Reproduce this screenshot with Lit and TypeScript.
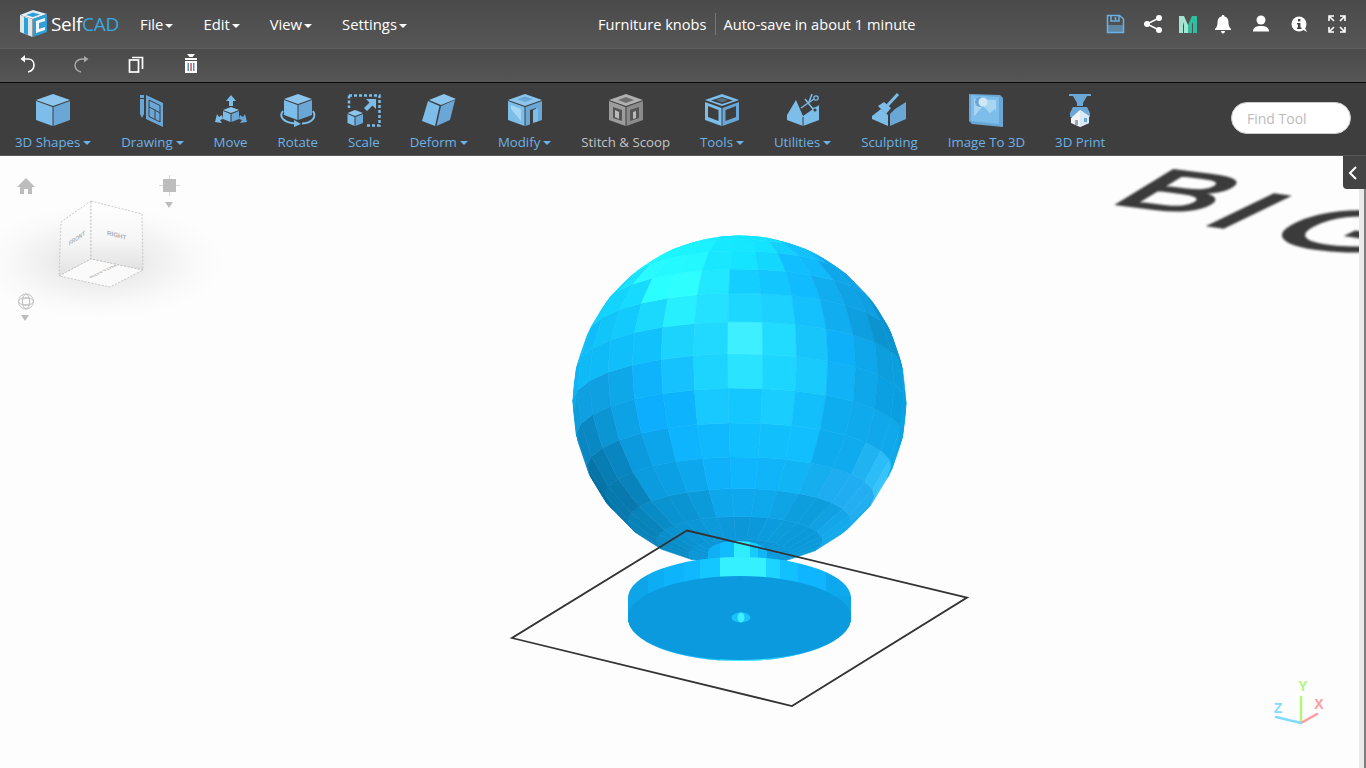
import { LitElement, html, css, svg } from "lit";
import { customElement } from "lit/decorators.js";

const RAD = Math.PI / 180;

// colour samples read off the reference, blended per facet
const SPHERE_COLOURS: [number, number, string][] = [
  [740, 250, "#14e8ff"], [680, 250, "#18f4ff"], [660, 285, "#2cffff"], [690, 280, "#30ffff"],
  [625, 295, "#12d4ff"], [590, 360, "#0fbcf8"], [740, 285, "#12ccff"], [800, 285, "#10bcff"],
  [850, 285, "#0fa2e6"], [885, 330, "#0b93cf"], [900, 400, "#0a9fe0"], [745, 340, "#40f2ff"],
  [712, 340, "#20d8ff"], [780, 340, "#22dcff"], [745, 375, "#2ae4ff"], [712, 375, "#1cd4ff"],
  [780, 375, "#1cd6ff"], [640, 340, "#10c0fb"], [660, 400, "#0caeff"], [600, 400, "#0e9fe0"],
  [590, 450, "#0a86c2"], [600, 490, "#056f9f"], [625, 510, "#0779ae"], [660, 470, "#0b9fe6"],
  [740, 420, "#10c4ff"], [740, 470, "#0fb6ff"], [840, 440, "#0ca8ec"], [885, 450, "#10a8ea"],
  [874, 486, "#3cc8ff"], [850, 505, "#1ea9ef"], [740, 505, "#0ea8ee"], [680, 510, "#0a94d2"],
  [640, 535, "#0883ba"], [740, 540, "#0b93d4"], [810, 530, "#0a99d8"], [850, 535, "#12adf0"],
  [840, 350, "#0fb0fa"], [690, 445, "#0fb4ff"], [800, 440, "#11c0ff"],
];

function hex(c: string) {
  return [1, 3, 5].map((i) => parseInt(c.slice(i, i + 2), 16));
}

function sampleColour(x: number, y: number) {
  let sum = 0;
  const rgb = [0, 0, 0];
  for (const [px, py, c] of SPHERE_COLOURS) {
    const d = (px - x) ** 2 + (py - y) ** 2 + 200;
    const w = 1 / (d * d);
    const v = hex(c);
    sum += w;
    rgb[0] += v[0] * w;
    rgb[1] += v[1] * w;
    rgb[2] += v[2] * w;
  }
  return `rgb(${rgb.map((v) => Math.round(v / sum)).join(",")})`;
}

function sphereFacets() {
  const R = 167, cx = 739.5, cy = 402, tilt = 16.8 * RAD;
  const project = (lat: number, lon: number) => {
    const p = lat * RAD, l = lon * RAD;
    return {
      x: cx + R * Math.cos(p) * Math.sin(l),
      y: cy - R * (Math.sin(p) * Math.cos(tilt) + Math.cos(p) * Math.cos(l) * Math.sin(tilt)),
      z: Math.cos(p) * Math.cos(l) * Math.cos(tilt) - Math.sin(p) * Math.sin(tilt),
    };
  };
  const facets = [];
  for (let lat = -84; lat < 84; lat += 12) {
    for (let lon = -112; lon < 112; lon += 12) {
      const c = [project(lat, lon), project(lat, lon + 12), project(lat + 12, lon + 12), project(lat + 12, lon)];
      if (c.every((q) => q.z < 0)) continue;
      const mx = c.reduce((a, q) => a + q.x, 0) / 4;
      const my = c.reduce((a, q) => a + q.y, 0) / 4;
      const fill = sampleColour(mx, my);
      const pts = c.map((q) => `${q.x.toFixed(1)},${q.y.toFixed(1)}`).join(" ");
      facets.push(svg`<polygon points=${pts} fill=${fill} stroke=${fill} stroke-width="0.6"></polygon>`);
    }
  }
  return facets;
}

const WALL: [number, number, string][] = [
  [628, 20, "#0ea5e8"], [648, 16, "#0cadf2"], [664, 20, "#0db4fb"], [684, 16, "#0fb8ff"],
  [700, 20, "#14c8ff"], [720, 46, "#35f0ff"], [766, 14, "#1cd4ff"], [780, 18, "#12c0ff"],
  [798, 28, "#0fb6ff"], [826, 25, "#0da8ee"],
];

const STEM: [number, number, string][] = [
  [708, 12, "#0fb0f4"], [720, 14, "#10bcff"], [734, 16, "#30ecff"], [750, 8, "#16ccff"], [758, 9, "#10b6f8"],
];

const scene = svg`
  <defs>
    <clipPath id="sphereClip"><circle cx="739.5" cy="402.5" r="167"></circle></clipPath>
    <clipPath id="diskClip"><path d="M628 598A111.500 41 0 0 1 851 598V618A111.500 43 0 0 1 628 618Z"></path></clipPath>
    <clipPath id="stemClip"><path d="M708 552A29.500 11 0 0 1 767 552V570H708Z"></path></clipPath>
    <clipPath id="textClip"><rect x="1100" y="156" width="259" height="120"></rect></clipPath>
    <radialGradient id="cubeShadow">
      <stop offset="0" stop-color="#000" stop-opacity="0.16"></stop>
      <stop offset="0.4" stop-color="#000" stop-opacity="0.06"></stop>
      <stop offset="0.75" stop-color="#000" stop-opacity="0.015"></stop>
      <stop offset="1" stop-color="#000" stop-opacity="0"></stop>
    </radialGradient>
    <linearGradient id="faceFill" x1="0" y1="0" x2="0" y2="1">
      <stop offset="0" stop-color="#fff"></stop>
      <stop offset="0.55" stop-color="#f6f6f6"></stop>
      <stop offset="1" stop-color="#e2e2e2"></stop>
    </linearGradient>
    <filter id="soft"><feGaussianBlur stdDeviation="0.8"></feGaussianBlur></filter>
  </defs>

  <g clip-path="url(#textClip)" filter="url(#soft)" fill="#3a3a3a" stroke="#3a3a3a" stroke-width="3" font-family="'Liberation Sans', sans-serif" font-size="100">
    <text transform="matrix(1.42 0.18 -0.82 0.5 1106 203)">B</text>
    <text transform="matrix(1.45 0.2 -0.95 0.46 1196 224)">I</text>
    <text transform="matrix(1.6 0.24 -1.05 0.5 1254 239)">G</text>
  </g>

  <g clip-path="url(#sphereClip)">${sphereFacets()}</g>

  <g clip-path="url(#stemClip)">
    ${STEM.map(([x, w, c]) => svg`<rect x=${x} y="535" width=${w} height="40" fill=${c}></rect>`)}
  </g>

  <g clip-path="url(#diskClip)">
    ${WALL.map(([x, w, c]) => svg`<rect x=${x} y="550" width=${w} height="120" fill=${c}></rect>`)}
    <rect x="620" y="596" width="240" height="30" fill="#0ea4e8"></rect>
    <ellipse cx="739.500" cy="618" rx="112" ry="42" fill="#0b9ade"></ellipse>
    <path d="M628 618A111.500 43 0 0 0 851 618V622A111.500 40 0 0 1 628 622Z" fill="#12a8ee"></path>
  </g>
  <ellipse cx="741" cy="617.500" rx="9.500" ry="5" fill="#1cc0fa"></ellipse>
  <ellipse cx="741" cy="617.500" rx="3.500" ry="5" fill="#3cf0ff"></ellipse>

  <polygon points="687,530.500 967,597.500 792,706 512,638" fill="none" stroke="#333" stroke-width="1.800"></polygon>

  <ellipse cx="100" cy="262" rx="125" ry="58" fill="url(#cubeShadow)"></ellipse>
  <g stroke="#bdbdbd" stroke-width="0.8" stroke-dasharray="2 1.500">
    <polygon points="91,201 61,222 59,276 91,259" fill="url(#faceFill)"></polygon>
    <polygon points="91,201 142,214 143,270 91,259" fill="url(#faceFill)"></polygon>
    <polygon points="59,276 91,259 143,270 110,287" fill="#fafafa"></polygon>
  </g>
  <g fill="#b0b0b0" font-family="'Liberation Sans', sans-serif" font-size="6.500" font-weight="700">
    <text transform="matrix(0.72 -0.5 0 1 69 246)">FRONT</text>
    <text transform="matrix(0.95 0.24 0 1 107 235)">RIGHT</text>
    <text transform="matrix(0.95 -0.45 0.5 0.2 91 278)">BOTTOM</text>
  </g>

  <path d="M26 178L35 187H32V194H28V189H24V194H20V187H17Z" fill="#bdbdbd"></path>
  <g fill="#bdbdbd">
    <rect x="163" y="179" width="13" height="13"></rect>
    <rect x="169" y="175" width="1" height="21" opacity="0.6"></rect>
    <rect x="159" y="185" width="21" height="1" opacity="0.6"></rect>
    <path d="M165 202H173L169 208Z"></path>
    <path d="M21 315H29L25 321Z"></path>
  </g>
  <g fill="none" stroke="#c2c2c2" stroke-width="1">
    <circle cx="26" cy="301.500" r="7.500"></circle>
    <ellipse cx="26" cy="301.500" rx="3.500" ry="7.500"></ellipse>
    <ellipse cx="26" cy="301.500" rx="7.500" ry="3.500"></ellipse>
    <rect x="22.500" y="298" width="7" height="7"></rect>
  </g>

  <g stroke-width="2.500" stroke-linecap="round">
    <line x1="1301" y1="723" x2="1301" y2="697" stroke="#b5f57c"></line>
    <line x1="1301" y1="723" x2="1317" y2="714" stroke="#ff9c9c"></line>
    <line x1="1301" y1="723" x2="1276" y2="717" stroke="#80dcff"></line>
  </g>
  <g font-family="'Liberation Sans', sans-serif" font-size="14" font-weight="700" text-anchor="middle">
    <text x="1303" y="691" fill="#b5f57c">Y</text>
    <text x="1319" y="709" fill="#ff9c9c">X</text>
    <text x="1278" y="713" fill="#80dcff">Z</text>
  </g>
`;

const L = "#7cbde9"; // light face
const M = "#6aa7d6"; // darker face
const D = "#3e3e3e"; // toolbar colour, used for cut lines

const toolIcons: Record<string, unknown> = {
  shapes: svg`
    <polygon points="20,2 37,8 20,14 3,8" fill="#8cc6ec"></polygon>
    <polygon points="3,9 19.500,15 19.500,34 3,28" fill=${L}></polygon>
    <polygon points="20.500,15 37,9 37,28 20.500,34" fill=${M}></polygon>`,
  drawing: svg`
    <polygon points="14,3 31,11 31,35 14,27" fill=${M}></polygon>
    <path d="M17 8L28 13.500V30L17 24.500ZM17 15L23 18V27M23 18L28 21" fill="none" stroke=${D} stroke-width="1"></path>
    <path d="M8 3H12V22L10 26L8 22Z" fill=${M}></path>
    <rect x="8" y="6" width="4" height="1" fill=${D}></rect>`,
  move: svg`
    <path d="M20 3L25 9H22V14H18V9H15Z" fill=${L}></path>
    <polygon points="20,15 28,18 20,21 12,18" fill="#8cc6ec"></polygon>
    <polygon points="12,19 19.500,22 19.500,30 12,27" fill=${L}></polygon>
    <polygon points="20.500,22 28,19 28,27 20.500,30" fill=${M}></polygon>
    <path d="M4 30L6 22L8 25L11 23L12 27L9 28L11 31Z" fill=${L}></path>
    <path d="M36 30L34 22L32 25L29 23L28 27L31 28L29 31Z" fill=${M}></path>`,
  rotate: svg`
    <polygon points="20,2 34,7 20,12 6,7" fill="#8cc6ec"></polygon>
    <polygon points="6,8 19.500,13 19.500,28 6,23" fill=${L}></polygon>
    <polygon points="20.500,13 34,8 34,23 20.500,28" fill=${M}></polygon>
    <path d="M5 19C1 24 4 30 17 31.500M35 19C39 25 34 31 24 31.500" fill="none" stroke=${L} stroke-width="2"></path>
    <path d="M16 28L23 32L16 35Z" fill=${L}></path>`,
  scale: svg`
    <path d="M5 3.500H35.500V33.500H22" fill="none" stroke=${L} stroke-width="2.500" stroke-dasharray="3 2"></path>
    <path d="M5 3.500V16" fill="none" stroke=${L} stroke-width="2.500" stroke-dasharray="3 2"></path>
    <path d="M32 7V17L28.500 13.500L23 19L20 16L25.500 10.500L22 7Z" fill=${L}></path>
    <polygon points="11,18 19,21 11,24 3.500,21" fill="#8cc6ec"></polygon>
    <polygon points="3.500,22 10.500,25 10.500,34 3.500,31" fill=${L}></polygon>
    <polygon points="11.500,25 19,22 19,31 11.500,34" fill=${M}></polygon>`,
  deform: svg`
    <polygon points="25,2 37,7 22,13 10,8" fill="#8cc6ec"></polygon>
    <polygon points="9,9 20.500,14 16,34 3,29" fill=${L}></polygon>
    <polygon points="22,14 36,8 31,28 17.500,34" fill=${M}></polygon>`,
  modify: svg`
    <polygon points="20,2 37,8 20,14 3,8" fill="#8cc6ec"></polygon>
    <polygon points="12,7 20,4.500 28,7 20,10" fill=${M}></polygon>
    <polygon points="3,9 19.500,15 19.500,34 3,28" fill=${L}></polygon>
    <polygon points="6,13 16,17 16,29 6,17" fill="#a5d8f5"></polygon>
    <polygon points="20.500,15 37,9 37,28 20.500,34" fill=${M}></polygon>
    <polygon points="25,18 31,16 31,30 25,33" fill=${D}></polygon>
    <polygon points="28,18 33,16 33,29 28,31" fill=${L}></polygon>`,
  stitch: svg`
    <polygon points="20,2 37,8 20,14 3,8" fill="#b0b0b0"></polygon>
    <polygon points="12,8 20,5 28,8 20,11" fill="#6e6e6e"></polygon>
    <polygon points="3,9 19.500,15 19.500,34 3,28" fill="#9c9c9c"></polygon>
    <polygon points="20.500,15 37,9 37,28 20.500,34" fill="#8a8a8a"></polygon>
    <polygon points="7,15 16,18 16,29 7,26" fill="#555"></polygon>
    <polygon points="24,18 33,15 33,26 24,29" fill="#555"></polygon>
    <polygon points="9,18 13,20 13,27 9,25" fill="#bbb"></polygon>
    <polygon points="27,20 30,19 30,26 27,27" fill="#bbb"></polygon>`,
  tools: svg`
    <polygon points="20,2 37,8 20,14 3,8" fill=${L}></polygon>
    <polygon points="20,5 31,8.500 20,12 9,8.500" fill=${D}></polygon>
    <polygon points="14,8 20,6 26,8 20,10.500" fill=${L} opacity="0.4"></polygon>
    <polygon points="3,10 19.500,16 19.500,34 3,28" fill=${L}></polygon>
    <polygon points="20.500,16 37,10 37,28 20.500,34" fill=${M}></polygon>
    <polygon points="6,14 16.500,18 16.500,29 6,25" fill=${D}></polygon>
    <polygon points="23.500,18 34,14 34,25 23.500,29" fill=${D}></polygon>`,
  utilities: svg`
    <path d="M4 23L13 8L20 24L36 13V28L20 34L4 28Z" fill=${L}></path>
    <path d="M20 25V34" stroke=${D} stroke-width="1"></path>
    <path d="M14 7L20 23M20 23L36 12" fill="none" stroke=${D} stroke-width="0.800" stroke-dasharray="1.500 1.500"></path>
    <path d="M18 16L31 7M22 7L30 17" stroke=${L} stroke-width="1.500"></path>
    <path d="M26 10L29 2" stroke=${L} stroke-width="1.500"></path>
    <circle cx="33" cy="6" r="2.200" fill=${D} stroke=${L} stroke-width="1.200"></circle>
    <circle cx="32" cy="18" r="2.200" fill=${D} stroke=${L} stroke-width="1.200"></circle>`,
  sculpting: svg`
    <path d="M3 24L12 17L19 23V34L3 27Z" fill=${L}></path>
    <path d="M21 34V22L26 17L37 10V27Z" fill=${M}></path>
    <path d="M29 2L17 15" stroke=${L} stroke-width="3"></path>
    <path d="M9 14L15 10L22 16L17 22Z" fill=${L}></path>`,
  image: svg`
    <polygon points="3,2 34,3 37,6 37,35 6,32 3,29" fill=${M}></polygon>
    <polygon points="5,3 33,5 33,32 5,29" fill=${L}></polygon>
    <polygon points="8,7 30,8 30,27 8,25" fill="#a8d5f2"></polygon>
    <path d="M5 28L17 14L24 21L29 17L33 31Z" fill=${L}></path>
    <circle cx="14" cy="10" r="5" fill=${M}></circle>
    <circle cx="17" cy="10" r="4.500" fill="#cfe7f7"></circle>`,
  print: svg`
    <rect x="9" y="2" width="22" height="2" fill=${M}></rect>
    <path d="M13 4H27L23 11V14H17V11Z" fill=${M}></path>
    <path d="M10 21L13 15H27L30 21V25H10Z" fill=${M}></path>
    <path d="M11 26L20 18L29 24V31L20 35L11 31Z" fill="#f0f4f7"></path>
    <path d="M20 18L29 24V31L20 35Z" fill="#d8e8f4"></path>
    <rect x="24" y="26" width="3" height="4" fill="#6aa7d6"></rect>
    <rect x="15" y="28" width="3" height="5" fill="#9ab"></rect>`,
};

const TOOLS = [
  { label: "3D Shapes", icon: "shapes", caret: true },
  { label: "Drawing", icon: "drawing", caret: true },
  { label: "Move", icon: "move" },
  { label: "Rotate", icon: "rotate" },
  { label: "Scale", icon: "scale" },
  { label: "Deform", icon: "deform", caret: true },
  { label: "Modify", icon: "modify", caret: true },
  { label: "Stitch & Scoop", icon: "stitch", grey: true },
  { label: "Tools", icon: "tools", caret: true },
  { label: "Utilities", icon: "utilities", caret: true },
  { label: "Sculpting", icon: "sculpting" },
  { label: "Image To 3D", icon: "image" },
  { label: "3D Print", icon: "print" },
];

@customElement("app-root")
export class AppRoot extends LitElement {
  static styles = css`
    :host {
      display: flex;
      flex-direction: column;
      height: 100vh;
      overflow: hidden;
      background: #fff;
      font-family: "Open Sans", sans-serif;
    }
    .top {
      display: flex;
      align-items: center;
      height: 48px;
      flex: none;
      background: linear-gradient(#4a4a4a, #565656);
      border-bottom: 1px solid #5f5f5f;
      color: #fff;
      font-size: 14.6px;
    }
    .left {
      display: flex;
      align-items: center;
      width: 598px;
      flex: none;
      box-sizing: border-box;
      padding-left: 20px;
    }
    .brand {
      display: flex;
      align-items: center;
      gap: 4px;
      width: 120px;
      flex: none;
      font-size: 19px;
      letter-spacing: -0.3px;
    }
    .brand span span {
      color: #38a9e0;
    }
    .menu {
      display: flex;
      gap: 30px;
    }
    .menu div {
      font-size: 14.8px;
    }
    .menu .caret {
      margin-left: 2px;
    }
    .caret {
      display: inline-block;
      vertical-align: middle;
      border-top: 4px solid currentColor;
      border-left: 4px solid transparent;
      border-right: 4px solid transparent;
    }
    .title {
      display: flex;
      align-items: center;
    }
    .divider {
      width: 1px;
      height: 22px;
      margin: 0 7px 0 9px;
      background: #777;
    }
    .status {
      display: flex;
      align-items: center;
      gap: 18px;
      margin-left: auto;
      padding-right: 19px;
    }
    .status svg {
      display: block;
      width: 20px;
      height: 20px;
    }
    .tight {
      margin-left: -3px;
    }
    .history {
      display: flex;
      align-items: flex-start;
      gap: 34.5px;
      height: 33px;
      flex: none;
      padding-left: 17px;
      background: linear-gradient(#4a4a4a, #565656);
      border-bottom: 1px solid #0c0c0c;
    }
    .history svg {
      display: block;
      width: 20px;
      height: 20px;
      margin-top: 5px;
    }
    .tools {
      display: flex;
      align-items: flex-start;
      height: 72px;
      flex: none;
      padding-left: 15px;
      background: #3e3e3e;
      border-bottom: 1px solid #565656;
    }
    .tool {
      display: flex;
      flex-direction: column;
      align-items: center;
      margin-right: 30px;
      padding-top: 9px;
      color: #6cb2e6;
      font-size: 13.25px;
      line-height: 18px;
      white-space: nowrap;
    }
    .tool svg {
      display: block;
      width: 40px;
      height: 36px;
      margin: 0 -20px 5px;
    }
    .tool.grey {
      color: #c4c4c4;
    }
    .tool .caret {
      margin-left: 3px;
    }
    .find {
      box-sizing: border-box;
      width: 120px;
      height: 32px;
      margin: 19px 15px 0 auto;
      padding-left: 15px;
      background: #fff;
      border: 1px solid #ccc;
      border-radius: 16px;
      color: #bbb;
      font-size: 14px;
      line-height: 31px;
    }
    .canvas {
      position: relative;
      flex: 1;
      background: #fdfdfd;
    }
    .canvas > svg {
      position: absolute;
      top: 0;
      left: 0;
      width: 1366px;
      height: 612px;
    }
    .strip {
      position: absolute;
      top: 0;
      right: 0;
      bottom: 0;
      width: 5px;
      background: #e9e9e9;
      border-right: 2px solid #7d7d7d;
    }
    .collapse {
      position: absolute;
      top: 0;
      right: 0;
      display: flex;
      align-items: center;
      justify-content: center;
      width: 23px;
      height: 33px;
      background: #444;
      border-radius: 0 0 0 4px;
    }
    .collapse svg {
      display: block;
      width: 12px;
      height: 16px;
      margin-right: 3px;
    }
  `;

  render() {
    return html`
      <div class="top">
        <div class="left">
          <div class="brand">
            <svg width="27" height="28" viewBox="0 0 27 28">
              <polygon points="0,5 13,0 27,4 13,9" fill="#e4eef4"></polygon>
              <polygon points="6,5 13,2.500 20,4.500 13,7" fill="#2f9fd8"></polygon>
              <polygon points="0,5 12.500,9 12.500,27 0,22" fill="#dfe6ea"></polygon>
              <polygon points="4,7 8,8.500 8,25 4,23.500" fill="#2f9fd8"></polygon>
              <polygon points="13,9 27,4 27,22 13,27" fill="#2f9fd8"></polygon>
              <polygon points="16,11 25,8 25,11 19,13 19,19 25,17 25,20 16,23" fill="#f2f6f8"></polygon>
            </svg>
            <span>Self<span>CAD</span></span>
          </div>
          <div class="menu">
            ${["File", "Edit", "View", "Settings"].map((m) => html`<div>${m}<i class="caret"></i></div>`)}
          </div>
        </div>
        <div class="title">
          <span>Furniture knobs</span>
          <i class="divider"></i>
          <span>Auto-save in about 1 minute</span>
        </div>
        <div class="status">
          <svg viewBox="0 0 20 20"><path d="M2.500 1.500H14.500L18.500 5V18.500H2.500Z" fill="none" stroke="#69b1e6" stroke-width="1.500"></path><path d="M6 2V7H14V2M10.500 3V6" fill="none" stroke="#69b1e6" stroke-width="1.500"></path><rect x="3" y="11" width="15" height="7" fill="#69b1e6" opacity="0.55"></rect></svg>
          <svg viewBox="0 0 20 20" fill="#fff"><circle cx="16" cy="4" r="3"></circle><circle cx="4" cy="10" r="3"></circle><circle cx="16" cy="16" r="3"></circle><path d="M4 10L16 4M4 10L16 16" stroke="#fff" stroke-width="1.500"></path></svg>
          <svg class="tight" viewBox="0 0 20 20"><path d="M1 2H6L10 11V19H6V11L5 8V19H1Z" fill="#a6e4d2"></path><path d="M19 2H14L10 11V19H14V10L15 8V19H19Z" fill="#2dbf9f"></path></svg>
          <svg class="tight" viewBox="0 0 20 20" fill="#fff"><path d="M10 1C11 1 11.500 1.700 11.500 2.500C14.500 3.300 15.500 5.500 15.500 8.500C15.500 12 16.500 13.500 18 15V16H2V15C3.500 13.500 4.500 12 4.500 8.500C4.500 5.500 5.500 3.300 8.500 2.500C8.500 1.700 9 1 10 1Z"></path><path d="M8 17H12C12 18.500 11 19.500 10 19.500C9 19.500 8 18.500 8 17Z"></path></svg>
          <svg viewBox="0 0 20 20" fill="#fff"><circle cx="10" cy="6" r="4.500"></circle><path d="M2 17.500C2 13.500 5 12 10 12C15 12 18 13.500 18 17.500Z"></path></svg>
          <svg viewBox="0 0 20 20"><circle cx="10" cy="10" r="7.500" fill="#fff"></circle><path d="M13 15L18 18L15 12Z" fill="#fff"></path><rect x="9" y="5" width="2.400" height="2.400" fill="#444"></rect><path d="M8 9H11.400V13.500H12.500V15H8V13.500H9V10.500H8Z" fill="#444"></path></svg>
          <svg viewBox="0 0 20 20" fill="none" stroke="#fff" stroke-width="1.600"><path d="M2 7V2H7M2 2L7 7M18 7V2H13M18 2L13 7M2 13V18H7M2 18L7 13M18 13V18H13M18 18L13 13"></path></svg>
        </div>
      </div>

      <div class="history">
        <svg viewBox="0 0 20 20" fill="none" stroke="#fff" stroke-width="1.600"><path d="M6 5H11C15 5 17 8 17 11C17 14 15 17 11 18"></path><path d="M8 1L3.500 5L8 8.500" fill="#fff" stroke="none"></path></svg>
        <svg viewBox="0 0 20 20" fill="none" stroke="#aaa" stroke-width="1.400"><path d="M15 5H10C6 5 3 8 3 11C3 14 5 17 9 18"></path><path d="M12 2L16.500 5L12 8.500" fill="#aaa" stroke="none"></path></svg>
        <svg viewBox="0 0 20 20" fill="none" stroke="#fff" stroke-width="1.700"><rect x="3.500" y="6" width="9" height="12"></rect><path d="M6 3.500H16.500V15"></path></svg>
        <svg viewBox="0 0 20 20" fill="#fff"><path d="M6 0H14L11.500 3H8.500Z"></path><rect x="4" y="4" width="12" height="2"></rect><rect x="4" y="7" width="12" height="12"></rect><rect x="6.500" y="9" width="1.500" height="8" fill="#5b8fc0"></rect><rect x="9.300" y="9" width="1.500" height="8" fill="#c55"></rect><rect x="12" y="9" width="1.500" height="8" fill="#5b8fc0"></rect></svg>
      </div>

      <div class="tools">
        ${TOOLS.map(
          (t) => html`
            <div class="tool ${t.grey ? "grey" : ""}">
              <svg viewBox="0 0 40 36">${toolIcons[t.icon]}</svg>
              <div>${t.label}${t.caret ? html`<i class="caret"></i>` : ""}</div>
            </div>
          `,
        )}
        <div class="find">Find Tool</div>
      </div>

      <div class="canvas">
        <svg viewBox="0 156 1366 612">${scene}</svg>
        <div class="strip"></div>
        <div class="collapse">
          <svg viewBox="0 0 12 16" fill="none" stroke="#fff" stroke-width="2"><path d="M9 2L3 8L9 14"></path></svg>
        </div>
      </div>
    `;
  }
}
